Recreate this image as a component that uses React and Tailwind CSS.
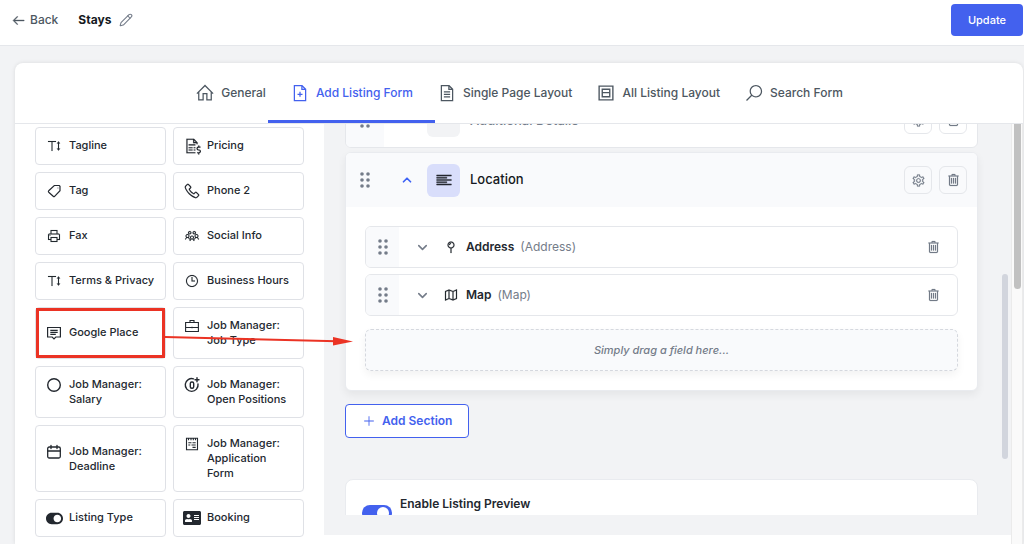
import React from "react";
import {
  LiaAlignLeftSolid,
  LiaArrowLeftSolid,
  LiaClock,
  LiaCogSolid,
  LiaFileAltSolid,
  LiaFileInvoiceDollarSolid,
  LiaFileMedicalSolid,
  LiaHomeSolid,
  LiaMapPinSolid,
  LiaMapSolid,
  LiaPhoneSolid,
  LiaPlusSolid,
  LiaPrintSolid,
  LiaSearchSolid,
  LiaTextHeightSolid,
  LiaTrashAltSolid,
  LiaUsersSolid,
} from "react-icons/lia";
import { FaAddressCard, FaToggleOn } from "react-icons/fa";
import { ChevronDown, ChevronUp, Pencil } from "lucide-react";
import clsx from "clsx";

function Stroke({ children, size = 16, width = 1.3 }) {
  return (
    <svg width={size} height={size} viewBox="0 0 16 16" fill="none" stroke="currentColor" strokeWidth={width} className="shrink-0" aria-hidden="true">
      {children}
    </svg>
  );
}

const LayoutIcon = () => (
  <Stroke size={20} width={1.1}>
    <path d="M2.5 2.5h11v11h-11z M5 5h6v6H5z M5 7.7h6" />
  </Stroke>
);

const TagIcon = () => (
  <Stroke width={1.2}>
    <path d="M8.3 2.5h4.9l.8.8v4.4l-5.4 5.6c-.4.4-1 .4-1.4 0L2.7 9.2c-.4-.4-.4-1 0-1.4z" />
    <path d="M11.6 5h.7" />
  </Stroke>
);

const BriefcaseIcon = () => (
  <Stroke width={1.1}>
    <path d="M1.6 4.5h12.8v9H1.6z M6 4.3V2.5h4v1.8 M1.6 9.5h12.8 M8 8.8v1.4" />
  </Stroke>
);

const CommentIcon = () => (
  <Stroke width={1.2}>
    <path d="M1.6 2.5h12.8v9.5H9.8L8 13.8 6.2 12H1.6z M4.3 5.3h7.4 M4.3 7.3h7.4 M4.3 9.3h5.5" />
  </Stroke>
);

const CircleIcon = () => (
  <Stroke width={1.4}>
    <circle cx="8" cy="8" r="6.3" />
  </Stroke>
);

const ZeroPlusIcon = () => (
  <Stroke width={1.4}>
    <path d="M9.5 1.8A6.4 6.4 0 1 0 14 7 M13 .8v4 M11 2.8h4" strokeLinecap="round" />
    <rect x="6.3" y="5" width="3.4" height="6.2" rx="1.5" />
  </Stroke>
);

const CalendarIcon = () => (
  <Stroke width={1.3}>
    <rect x="1.7" y="3" width="12.6" height="11" rx="1.5" />
    <path d="M1.7 7h12.6 M5 1.3v3.2 M11 1.3v3.2" strokeLinecap="round" />
  </Stroke>
);

const FormIcon = () => (
  <Stroke width={1.1}>
    <path d="M2.5 2.3h11v11.4h-11z M4.5 2v2.3 M7 2v2.3 M9.3 2v2.3 M11.5 2v2.3" />
    <path d="M4.3 6.8h3.2 M8.5 6.8h3.2 M4.3 9h2 M7.5 9h4.2 M8.5 11.4h3.2" />
  </Stroke>
);

const TABS = [
  { label: "General", icon: LiaHomeSolid },
  { label: "Add Listing Form", icon: LiaFileMedicalSolid, active: true },
  { label: "Single Page Layout", icon: LiaFileAltSolid },
  { label: "All Listing Layout", icon: LayoutIcon },
  { label: "Search Form", icon: LiaSearchSolid },
];

const FIELDS = [
  { label: "Tagline", icon: LiaTextHeightSolid },
  { label: "Pricing", icon: LiaFileInvoiceDollarSolid, size: 18 },
  { label: "Tag", icon: TagIcon },
  { label: "Phone 2", icon: LiaPhoneSolid, size: 18 },
  { label: "Fax", icon: LiaPrintSolid },
  { label: "Social Info", icon: LiaUsersSolid },
  { label: "Terms & Privacy", icon: LiaTextHeightSolid },
  { label: "Business Hours", icon: LiaClock },
  { label: "Google Place", icon: CommentIcon, highlight: true },
  { label: "Job Manager: Job Type", icon: BriefcaseIcon },
  { label: "Job Manager: Salary", icon: CircleIcon },
  { label: "Job Manager: Open Positions", icon: ZeroPlusIcon },
  { label: "Job Manager: Deadline", icon: CalendarIcon },
  { label: "Job Manager: Application Form", icon: FormIcon },
  { label: "Listing Type", icon: FaToggleOn, size: 17 },
  { label: "Booking", icon: FaAddressCard, size: 18 },
];

const ROWS = [
  { label: "Address", type: "(Address)", icon: LiaMapPinSolid },
  { label: "Map", type: "(Map)", icon: LiaMapSolid },
];

function Grip() {
  return (
    <svg width="10" height="16" viewBox="0 0 10 16" className="fill-[#747c89]" aria-hidden="true">
      {[2, 8, 14].map((y) => (
        <React.Fragment key={y}>
          <circle cx="2" cy={y} r="1.8" />
          <circle cx="8" cy={y} r="1.8" />
        </React.Fragment>
      ))}
    </svg>
  );
}

function SquareButton({ label, children }) {
  return (
    <button aria-label={label} className="flex size-7 items-center justify-center rounded-md border border-[#e5e7eb] text-[#747c89]">
      {children}
    </button>
  );
}

function SectionHeader({ title, open }) {
  return (
    <div className={clsx("flex h-[54px] items-center pr-[10px]", open && "bg-[#f9fafc]")}>
      <div className="flex w-[38px] items-center justify-center self-stretch bg-[#f9fafc]">
        <Grip />
      </div>
      <button aria-label={`Toggle ${title}`} className={clsx("mr-[13px] ml-4 text-[#3e62f5]", !open && "invisible")}>
        <ChevronUp size={14} strokeWidth={3} />
      </button>
      <div className={clsx("flex size-[33px] items-center justify-center rounded-md", open ? "bg-[#d9defb] text-[#23282f]" : "bg-[#f2f3f5] text-transparent")}>
        <LiaAlignLeftSolid size={18} strokeWidth={0.8} />
      </div>
      <h3 className={clsx("ml-[10px] flex-1 text-[13px] font-medium", open ? "text-[#141921]" : "pt-[2px] text-[#747c89]")}>{title}</h3>
      <div className="flex gap-[7px]">
        <SquareButton label="Section settings"><LiaCogSolid size={15} strokeWidth={0.4} /></SquareButton>
        <SquareButton label="Delete section"><LiaTrashAltSolid size={16} strokeWidth={0.4} /></SquareButton>
      </div>
    </div>
  );
}

function FieldRow({ row }) {
  const Icon = row.icon;
  return (
    <div className="flex h-[42px] items-center overflow-hidden rounded-md border border-[#e5e7eb] bg-white">
      <div className="flex w-[33px] items-center justify-center self-stretch bg-[#f9fafc]">
        <Grip />
      </div>
      <button aria-label={`Expand ${row.label}`} className="ml-4 text-[#747c89]">
        <ChevronDown size={15} strokeWidth={2.5} />
      </button>
      <Icon size={16} strokeWidth={0.4} className="ml-[13px] text-[#23282f]" />
      <span className="ml-[7px] text-xs font-semibold text-[#23282f]">{row.label}</span>
      <span className="ml-[6px] flex-1 text-xs text-[#747c89]">{row.type}</span>
      <button aria-label={`Delete ${row.label}`} className="mr-4 text-[#747c89]">
        <LiaTrashAltSolid size={16} strokeWidth={0.4} />
      </button>
    </div>
  );
}

function FieldCard({ field }) {
  const Icon = field.icon;
  return (
    <button
      className={clsx(
        "relative flex min-h-[38px] items-center rounded border border-[#dfe1e6] bg-white py-[10px] pl-[10px] pr-1 text-left text-[#23282f]",
        field.highlight && "z-10"
      )}
    >
      <span className="flex items-start gap-[7px]">
        <span className="flex size-4 shrink-0 items-center justify-center">
          <Icon size={field.size || 16} strokeWidth={0.2} className="shrink-0" />
        </span>
        <span className="max-w-[86px] text-[11px] leading-[15px] font-medium">{field.label}</span>
      </span>
      {field.highlight && (
        <>
          <span className="absolute inset-0 border-[3px] border-[#eb3324]" />
          <svg width="190" height="16" viewBox="0 0 190 16" className="absolute top-1/2 left-full" aria-hidden="true">
            <path d="M0 4l172 4.3" stroke="#eb3324" strokeWidth="2" />
            <path d="M168 4l20 4.5-20 4z" fill="#eb3324" />
          </svg>
        </>
      )}
    </button>
  );
}

export default function App() {
  return (
    <div className="flex h-screen flex-col overflow-hidden bg-[#f2f3f5] font-['Inter',sans-serif]">
      <header className="flex h-[46px] shrink-0 items-start justify-between border-b border-[#e5e7eb] bg-white pl-[11px]">
        <div className="flex h-10 items-center">
          <a href="#back" className="flex items-center gap-1 text-xs font-medium text-[#4d5761]">
            <LiaArrowLeftSolid size={15} strokeWidth={0.8} />
            Back
          </a>
          <h1 className="ml-5 text-xs font-bold text-[#141921]">Stays</h1>
          <button aria-label="Rename" className="ml-2 text-[#747c89]">
            <Pencil size={14} strokeWidth={1.8} />
          </button>
        </div>
        <button className="mt-1 mr-px h-8 rounded bg-[#4361ee] px-[17px] text-[11px] font-medium text-white">Update</button>
      </header>

      <main className="mt-[17px] mr-px ml-[15px] flex min-h-0 flex-1 flex-col overflow-hidden rounded-t-lg bg-white shadow-[0_0_4px_rgba(0,0,0,0.1)]">
        <nav className="flex h-[61px] shrink-0 items-stretch justify-center gap-6 border-b border-[#e5e7eb]">
          {TABS.map((t) => (
            <a
              key={t.label}
              href="#tab"
              className={clsx("relative flex items-center gap-[6px] text-xs font-medium", t.active ? "text-[#4361ee]" : "text-[#4d5761]")}
            >
              <t.icon size={20} />
              {t.label}
              {t.active && <span className="absolute -inset-x-[22px] bottom-0 h-[3px] bg-[#4361ee]" />}
            </a>
          ))}
        </nav>

        <div className="flex min-h-0 flex-1">
          <aside className="relative z-10 w-[309px] shrink-0 px-5 pt-[3px]">
            <div className="grid grid-cols-2 gap-[7px]">
              {FIELDS.map((f) => (
                <FieldCard key={f.label} field={f} />
              ))}
            </div>
          </aside>

          <section className="relative mb-[9px] flex min-w-0 flex-1 flex-col bg-[#f2f3f5] pb-5">
            <div className="min-h-0 flex-1 overflow-hidden pr-[33px] pl-[21px]">
              <div className="-mt-8 overflow-hidden rounded-md border border-[#e5e7eb] bg-white">
                <SectionHeader title="Additional Details" />
              </div>

              <div className="mt-1 overflow-hidden rounded-md border border-[#e9ebef] bg-white shadow-[0_4px_8px_rgba(0,0,0,0.06)]">
                <SectionHeader title="Location" open />
                <div className="flex flex-col gap-[6px] px-[19px] py-[19px]">
                  {ROWS.map((r) => (
                    <FieldRow key={r.label} row={r} />
                  ))}
                  <div className="mt-[7px] flex h-[42px] items-center justify-center rounded-md border border-dashed border-[#d5d8de] bg-[#f9fafc] text-[11px] font-medium text-[#747c89] italic shadow-[0_4px_8px_rgba(0,0,0,0.05)]">
                    Simply drag a field here...
                  </div>
                </div>
              </div>

              <button className="mt-[13px] flex h-[34px] items-center gap-[6px] rounded border border-[#4361ee] bg-white px-4 text-xs font-semibold text-[#4361ee]">
                <LiaPlusSolid size={14} />
                Add Section
              </button>

              <div className="mt-[41px] flex h-20 items-start gap-2 rounded-lg border border-[#e9ebef] bg-white pl-4">
                <input
                  id="listing-preview"
                  type="checkbox"
                  defaultChecked
                  className="relative mt-[25px] h-4 w-[30px] shrink-0 appearance-none rounded-full bg-[#4361ee] before:absolute before:top-[2px] before:right-[3px] before:size-3 before:rounded-full before:bg-white"
                />
                <label htmlFor="listing-preview" className="mt-[14px] text-xs leading-5 font-semibold text-[#23282f]">
                  Enable Listing Preview
                </label>
              </div>
            </div>
            <div className="absolute top-[150px] right-[3px] h-[185px] w-[6px] rounded-full bg-[#d2d5dd]" />
          </section>

          <div className="flex w-3 shrink-0 justify-center border-x border-[#ebebeb] bg-[#fafafa]">
            <div className="h-[165px] w-[7px] rounded-b-full bg-[#c1c1c1]" />
          </div>
        </div>
      </main>
    </div>
  );
}
